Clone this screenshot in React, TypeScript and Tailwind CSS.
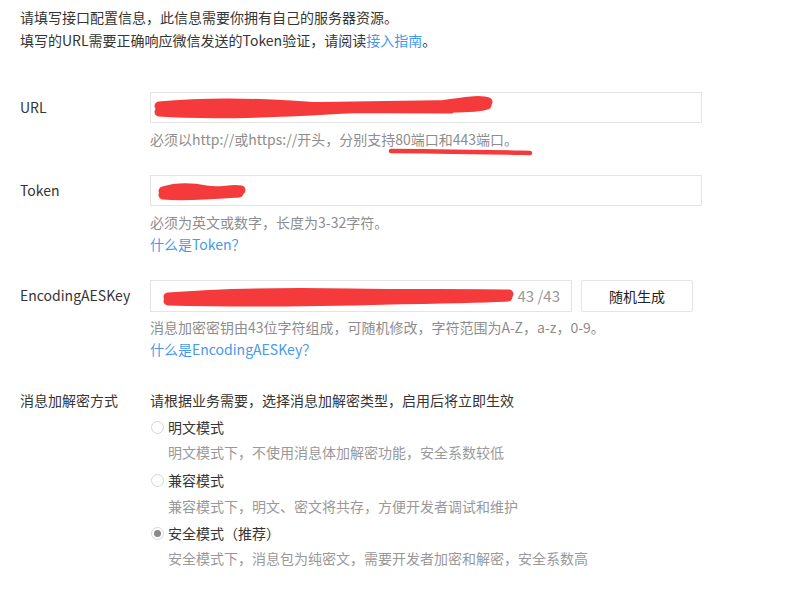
import React from "react";

const font = { fontFamily: '"Noto Sans CJK SC", "Noto Sans", sans-serif' };

function Radio({ checked, label }: { checked?: boolean; label: string }) {
  return (
    <div className="flex items-center h-[22px] leading-[22px]">
      <span className="ml-[1px] w-[13px] h-[13px] rounded-full border border-[#d6d6d6] bg-white flex items-center justify-center shrink-0">
        {checked && <span className="w-[7px] h-[7px] rounded-full bg-[#8a8a8a]" />}
      </span>
      <span className="ml-[4px] text-[#353535]">{label}</span>
    </div>
  );
}

export default function App() {
  return (
    <div className="w-[796px] h-[589px] bg-white text-[14px] text-[#353535] overflow-hidden" style={font}>
      <div className="pl-[20px] pt-[6px]">
        <p className="leading-[23px]">请填写接口配置信息，此信息需要你拥有自己的服务器资源。</p>
        <p className="leading-[23px]">
          填写的URL需要正确响应微信发送的Token验证，请阅读<span className="text-[#459ae9]">接入指南</span>。
        </p>

        {/* URL */}
        <div className="flex mt-[40px]">
          <div className="w-[130px] leading-[31px]">URL</div>
          <div>
            <div className="relative w-[552px] h-[31px] border border-[#e4e4e4] bg-white">
              <svg className="absolute left-0 top-0" width="552" height="31" viewBox="0 0 552 31">
                <path
                  d="M8 13 C40 10 90 9 140 12 C190 16 240 18 290 12 C315 8 330 6 337 9 M8 19 C50 22 100 21 160 18 C220 14 260 14 300 15 C320 15 330 14 336 12 M9 16 L335 11 M60 15 L300 16"
                  stroke="#f43a3a"
                  strokeWidth="9"
                  fill="none"
                  strokeLinecap="round"
                  strokeLinejoin="round"
                />
              </svg>
            </div>
            <div className="relative mt-[5px] leading-[22px] text-[#8d8d8d]">
              必须以http://或https://开头，分别支持80端口和443端口。
              <svg className="absolute left-[238px] top-[20px]" width="146" height="8" viewBox="0 0 146 8">
                <path d="M3 3 C40 3 90 4 142 5" stroke="#f43a3a" strokeWidth="4.5" fill="none" strokeLinecap="round" />
              </svg>
            </div>
          </div>
        </div>

        {/* Token */}
        <div className="flex mt-[25px]">
          <div className="w-[130px] leading-[31px]">Token</div>
          <div>
            <div className="relative w-[552px] h-[31px] border border-[#e4e4e4] bg-white">
              <svg className="absolute left-0 top-0" width="120" height="31" viewBox="0 0 120 31">
                <path
                  d="M12 15 C25 11 40 11 55 14 C70 17 78 12 90 14 M12 19 C35 21 60 19 88 17 M14 17 L88 15"
                  stroke="#f43a3a"
                  strokeWidth="9"
                  fill="none"
                  strokeLinecap="round"
                  strokeLinejoin="round"
                />
              </svg>
            </div>
            <div className="mt-[5px] leading-[22px] text-[#8d8d8d]">必须为英文或数字，长度为3-32字符。</div>
            <div className="leading-[22px] text-[#459ae9]">什么是Token？</div>
          </div>
        </div>

        {/* EncodingAESKey */}
        <div className="flex mt-[25px]">
          <div className="w-[130px] leading-[31px]">EncodingAESKey</div>
          <div>
            <div className="flex">
              <div className="relative w-[422px] h-[32px] border border-[#e4e4e4] bg-white flex items-center justify-end pr-[11px] text-[15px] text-[#999999]">
                <svg className="absolute left-0 top-0" width="370" height="32" viewBox="0 0 370 32">
                  <path
                    d="M17 16 C80 11 140 11 200 12 C260 13 320 12 358 13 M17 20 C90 22 170 21 240 19 C300 18 340 17 357 16 M18 18 L356 15"
                    stroke="#f43a3a"
                    strokeWidth="9"
                    fill="none"
                    strokeLinecap="round"
                    strokeLinejoin="round"
                  />
                </svg>
                43 /43
              </div>
              <div className="ml-[9px] w-[112px] h-[32px] border border-[#e4e4e4] rounded-[2px] bg-white flex items-center justify-center text-[#222222]">
                随机生成
              </div>
            </div>
            <div className="mt-[4px] leading-[22px] text-[#8d8d8d]">
              消息加密密钥由43位字符组成，可随机修改，字符范围为A-Z，a-z，0-9。
            </div>
            <div className="leading-[22px] text-[#459ae9]">什么是EncodingAESKey？</div>
          </div>
        </div>

        {/* 加解密方式 */}
        <div className="flex mt-[29px]">
          <div className="w-[130px] leading-[22px]">消息加解密方式</div>
          <div>
            <div className="leading-[22px]">请根据业务需要，选择消息加解密类型，启用后将立即生效</div>
            <div className="mt-[5px]">
              <Radio label="明文模式" />
            </div>
            <div className="mt-[3px] ml-[18px] leading-[22px] text-[#999999]">明文模式下，不使用消息体加解密功能，安全系数较低</div>
            <div className="mt-[6px]">
              <Radio label="兼容模式" />
            </div>
            <div className="mt-[4px] ml-[18px] leading-[22px] text-[#999999]">兼容模式下，明文、密文将共存，方便开发者调试和维护</div>
            <div className="mt-[5px]">
              <Radio checked label="安全模式（推荐）" />
            </div>
            <div className="mt-[3px] ml-[18px] leading-[22px] text-[#999999]">安全模式下，消息包为纯密文，需要开发者加密和解密，安全系数高</div>
          </div>
        </div>
      </div>
    </div>
  );
}
